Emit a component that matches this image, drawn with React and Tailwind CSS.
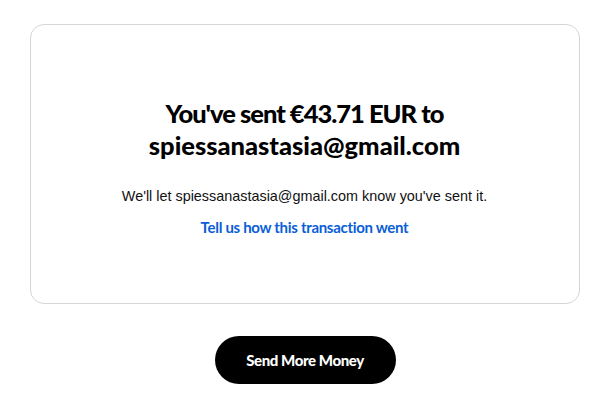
export default function App() {
  return (
    <div className="w-[610px] h-[401px] bg-white flex flex-col items-center pt-[24px]">
      <div className="w-[550px] h-[280px] ml-[-1px] border border-[#d6d6d6] rounded-[14px] flex flex-col items-center pt-[72px]">
        <h1 className="font-['Lato',sans-serif] font-black text-[25.5px] leading-[32px] text-black text-center">
          <span className="tracking-[-1px]">You've sent €43.71 EUR to</span>
          <br />
          <span className="tracking-[0px]">spiessanastasia@gmail.com</span>
        </h1>
        <p className="mt-[26px] font-['Liberation_Sans',Arial,sans-serif] text-[14.4px] leading-[18px] text-[#111]">
          We'll let spiessanastasia@gmail.com know you've sent it.
        </p>
        <a className="mt-[13px] font-['Lato',sans-serif] font-bold text-[15px] leading-[18px] tracking-[-0.3px] text-[#0a5ed7]">
          Tell us how this transaction went
        </a>
      </div>
      <button className="mt-[32px] w-[181px] h-[48px] rounded-full bg-black text-white font-['Lato',sans-serif] font-black text-[15px] tracking-[-0.4px]">
        Send More Money
      </button>
    </div>
  );
}
